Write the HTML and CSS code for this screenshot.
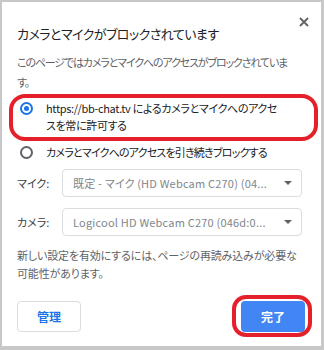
FILE: index.html
```html
<!DOCTYPE html>
<html lang="ja">
<head>
    <meta charset="UTF-8">
    <meta name="viewport" content="width=device-width, initial-scale=1.0">
    <title>カメラとマイクがブロックされています</title>
    <link rel="stylesheet" href="styles.css">
</head>
<body>
    <div class="dialog">
        <!-- En-tête -->
        <header class="dialog-header">
            <h1 class="dialog-title">カメラとマイクがブロックされています</h1>
            <button class="close-button" aria-label="閉じる">
                <svg width="10" height="10" viewBox="0 0 10 10">
                    <path d="M1 1 L9 9 M9 1 L1 9" stroke="#5f6368" stroke-width="1.8" fill="none"/>
                </svg>
            </button>
        </header>

        <p class="desc">
            <span class="line">このページではカメラとマイクへのアクセスがブロックされていま</span>
            <span class="line">す。</span>
        </p>

        <!-- Choix -->
        <div class="options">
            <label class="option highlighted">
                <span class="radio checked"></span>
                <span class="option-text">
                    <span class="line">https://bb-chat.tv によるカメラとマイクへのアクセ</span>
                    <span class="line">スを常に許可する</span>
                </span>
            </label>
            <label class="option">
                <span class="radio"></span>
                <span class="option-text block-text">カメラとマイクへのアクセスを引き続きブロックする</span>
            </label>
        </div>

        <div class="devices">
            <div class="device-row">
                <span class="device-label">マイク:</span>
                <div class="select">
                    <span>既定 - マイク (HD Webcam C270) (04...</span>
                    <span class="arrow"></span>
                </div>
            </div>
            <div class="device-row">
                <span class="device-label">カメラ:</span>
                <div class="select">
                    <span>Logicool HD Webcam C270 (046d:0...</span>
                    <span class="arrow"></span>
                </div>
            </div>
        </div>

        <p class="note">
            <span class="line">新しい設定を有効にするには、ページの再読み込みが必要な</span>
            <span class="line">可能性があります。</span>
        </p>

        <div class="actions">
            <button class="btn btn-secondary">管理</button>
            <button class="btn btn-primary highlighted-btn">完了</button>
        </div>
    </div>
</body>
</html>
```

FILE: styles.css
```css
/* Reset */
* {
    margin: 0;
    padding: 0;
    box-sizing: border-box;
}

html {
    background-color: #c8c8c8;
}

body {
    font-family: 'Noto Sans CJK JP', 'Noto Sans', sans-serif;
    font-feature-settings: "palt";
    font-size: 11px;
    color: #202124;
    padding: 2px 3px 4px 2px;
    white-space: nowrap;
}

.line {
    display: block;
}

.dialog {
    background-color: #ffffff;
    padding: 15px 16px 14px 15px;
}

.dialog-header {
    display: flex;
    justify-content: space-between;
    align-items: flex-start;
}

.dialog-title {
    margin-top: 7px;
    font-size: 13px;
    font-weight: 400;
    line-height: 20px;
    letter-spacing: -0.55px;
    color: #202124;
}

.close-button {
    width: 10px;
    height: 10px;
    margin-right: -4px;
    border: none;
    background: none;
    display: flex;
}

.desc {
    margin-top: 8px;
    line-height: 20px;
    letter-spacing: -1.15px;
    color: #5f6368;
}

.options {
    margin-top: 8px;
    display: flex;
    flex-direction: column;
    gap: 10px;
}

.option {
    position: relative;
    display: flex;
    align-items: flex-start;
    gap: 13px;
    padding-left: 3px;
    line-height: 17px;
    letter-spacing: -0.35px;
    color: #202124;
}

.option .block-text {
    letter-spacing: -0.8px;
}

.radio {
    flex: none;
    width: 13px;
    height: 13px;
    margin-top: 2px;
    border: 2px solid #5f6368;
    border-radius: 50%;
    display: flex;
    align-items: center;
    justify-content: center;
}

.radio.checked {
    border-color: #1a73e8;
}

.radio.checked::before {
    content: "";
    width: 5px;
    height: 5px;
    border-radius: 50%;
    background-color: #1a73e8;
}

/* Annotations rouges */
.highlighted::after,
.highlighted-btn::after {
    content: "";
    position: absolute;
    border: 4px solid #e4202a;
    pointer-events: none;
}

.highlighted::after {
    top: -6px;
    bottom: -7px;
    left: -8px;
    right: -13px;
    border-radius: 16px;
}

.devices {
    margin-top: 8px;
    display: flex;
    flex-direction: column;
    gap: 11px;
}

.device-row {
    display: flex;
    align-items: center;
}

.device-label {
    width: 45px;
    color: #3c4043;
}

.select {
    width: 240px;
    height: 28px;
    border: 1px solid #dadce0;
    border-radius: 4px;
    padding: 0 10px;
    display: flex;
    align-items: center;
    justify-content: space-between;
    letter-spacing: 0.2px;
    color: #80868b;
}

.arrow {
    width: 0;
    height: 0;
    border-left: 4px solid transparent;
    border-right: 4px solid transparent;
    border-top: 4px solid #5f6368;
    margin-right: -1px;
}

.note {
    margin-top: 10px;
    line-height: 18px;
    letter-spacing: -0.15px;
    color: #5f6368;
}

.actions {
    margin-top: 19px;
    display: flex;
    justify-content: space-between;
}

.btn {
    position: relative;
    width: 64px;
    height: 31px;
    border-radius: 4px;
    font-family: inherit;
    font-size: 12px;
    font-weight: 700;
    cursor: pointer;
}

.btn-secondary {
    background-color: #ffffff;
    border: 1px solid #dadce0;
    color: #1a73e8;
}

.btn-primary {
    background-color: #4285f4;
    border: none;
    color: #ffffff;
}

.highlighted-btn::after {
    top: -6px;
    bottom: -5px;
    left: -9px;
    right: -7px;
    border-radius: 14px;
}
```
